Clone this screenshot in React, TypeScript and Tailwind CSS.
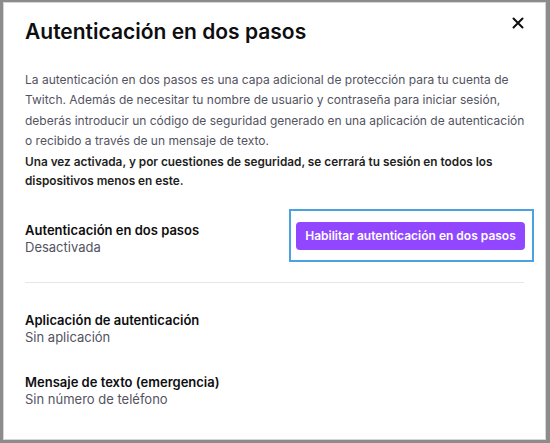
import React from "react";

export default function App() {
  return (
    <div className="w-[550px] h-[443px] bg-[#8c8c8c] pt-[2px] pl-[3px] pr-[4px] pb-[3px]" style={{ fontFamily: "Inter, 'Noto Sans', sans-serif" }}>
      <div className="w-full h-full bg-white border border-[#d6d6d6] relative overflow-hidden">
        <button className="absolute top-[10px] right-[17px] w-[20px] h-[20px] flex items-center justify-center text-[#0e0e10]">
          <svg width="12" height="12" viewBox="0 0 12 12">
            <path d="M1.5 1.5 L10.5 10.5 M10.5 1.5 L1.5 10.5" stroke="#0e0e10" strokeWidth="2" strokeLinecap="round" />
          </svg>
        </button>
        <div className="pl-[21px] pr-[21px] pt-[15px]">
          <h1 className="text-[21px] leading-[28px] font-semibold text-[#0e0e10]">Autenticación en dos pasos</h1>
          <p className="mt-[24px] w-[502px] text-[12px] leading-[20.3px] text-[#53535f]">
            La autenticación en dos pasos es una capa adicional de protección para tu cuenta de Twitch. Además de necesitar tu nombre de usuario y contraseña para iniciar sesión, deberás introducir un código de seguridad generado en una aplicación de autenticación o recibido a través de un mensaje de texto.
          </p>
          <p className="mt-[2px] text-[11.8px] leading-[19px] font-semibold text-[#1f1f23]">
            Una vez activada, y por cuestiones de seguridad, se cerrará tu sesión en todos los dispositivos menos en este.
          </p>
          <div className="mt-[18px] flex items-start justify-between">
            <div className="pt-[13px]">
              <div className="text-[13px] leading-[17px] font-semibold text-[#0e0e10]">Autenticación en dos pasos</div>
              <div className="text-[13px] leading-[17px] text-[#53535f]">Desactivada</div>
            </div>
            <div className="-mr-[10px] border-2 border-[#4aa3de] pl-[5px] pr-[7px] pt-[11px] pb-[10px]">
              <button className="h-[28px] w-[229px] rounded-[4px] bg-[#9147ff] text-white text-[12px] font-semibold flex items-center justify-center">
                Habilitar autenticación en dos pasos
              </button>
            </div>
          </div>
          <div className="mt-[20px] border-t border-[#e6e6ea]" />
          <div className="mt-[29px]">
            <div className="text-[13px] leading-[17px] font-semibold text-[#0e0e10]">Aplicación de autenticación</div>
            <div className="text-[13px] leading-[17px] text-[#53535f]">Sin aplicación</div>
          </div>
          <div className="mt-[28px]">
            <div className="text-[13px] leading-[17px] font-semibold text-[#0e0e10]">Mensaje de texto (emergencia)</div>
            <div className="text-[13px] leading-[17px] text-[#53535f]">Sin número de teléfono</div>
          </div>
        </div>
      </div>
    </div>
  );
}
